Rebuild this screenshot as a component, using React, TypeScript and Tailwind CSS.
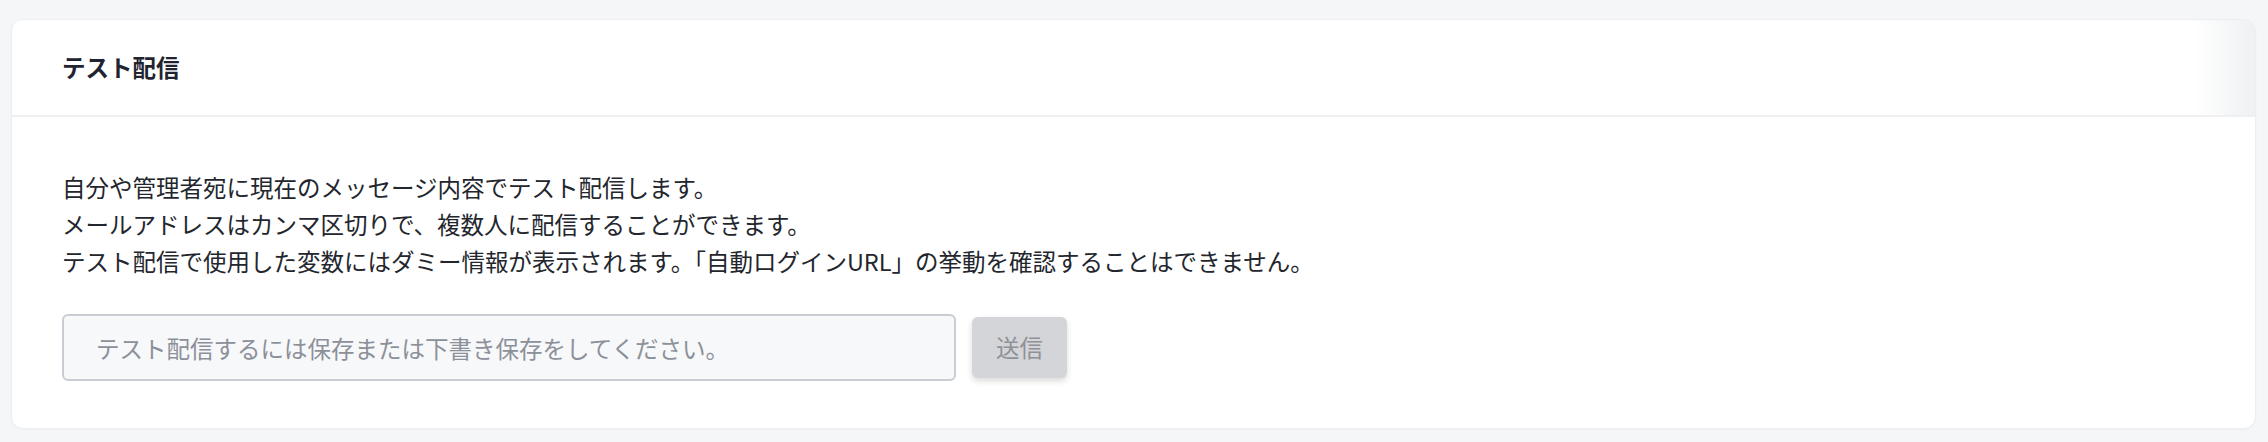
export default function App() {
  return (
    <div className="min-h-[442px] w-full bg-[#f5f6f8] pb-[12px] pl-[11px] pr-[12px] pt-[19px] font-['Noto_Sans_CJK_JP',sans-serif]">
      <div className="overflow-hidden rounded-[12px] border border-[#eceef1] bg-white shadow-[0_1px_2px_rgba(0,0,0,0.03)]">
        <div className="relative flex h-[97px] items-center border-b-2 border-[#eef0f2] px-[50px]">
          <h2 className="text-[23.5px] font-bold text-[#1f2430]">テスト配信</h2>
          <div className="absolute right-0 top-0 h-full w-[60px] bg-gradient-to-l from-[#eef0f2] to-transparent" />
        </div>
        <div className="px-[50px] pb-[47px] pt-[52px]">
          <div className="text-[23.5px] leading-[37px] text-[#23262d]">
            <p>自分や管理者宛に現在のメッセージ内容でテスト配信します。</p>
            <p>メールアドレスはカンマ区切りで、複数人に配信することができます。</p>
            <p>
              テスト配信で使用した変数にはダミー情報が表示されます。「自動ログインURL」の挙動を確認することはできません。
            </p>
          </div>
          <div className="mt-[34px] flex items-center gap-[16px]">
            <input
              disabled
              placeholder="テスト配信するには保存または下書き保存をしてください。"
              className="h-[67px] w-[894px] rounded-[6px] border-2 border-[#c9ccd3] bg-[#f7f8fa] px-[32px] text-[23.5px] text-[#23262d] placeholder:text-[#8c9099]"
            />
            <button
              disabled
              className="h-[61px] w-[95px] rounded-[6px] bg-[#d4d5d8] text-[23.5px] text-[#8f9196] shadow-[0_3px_6px_rgba(0,0,0,0.15)]"
            >
              送信
            </button>
          </div>
        </div>
      </div>
    </div>
  );
}
